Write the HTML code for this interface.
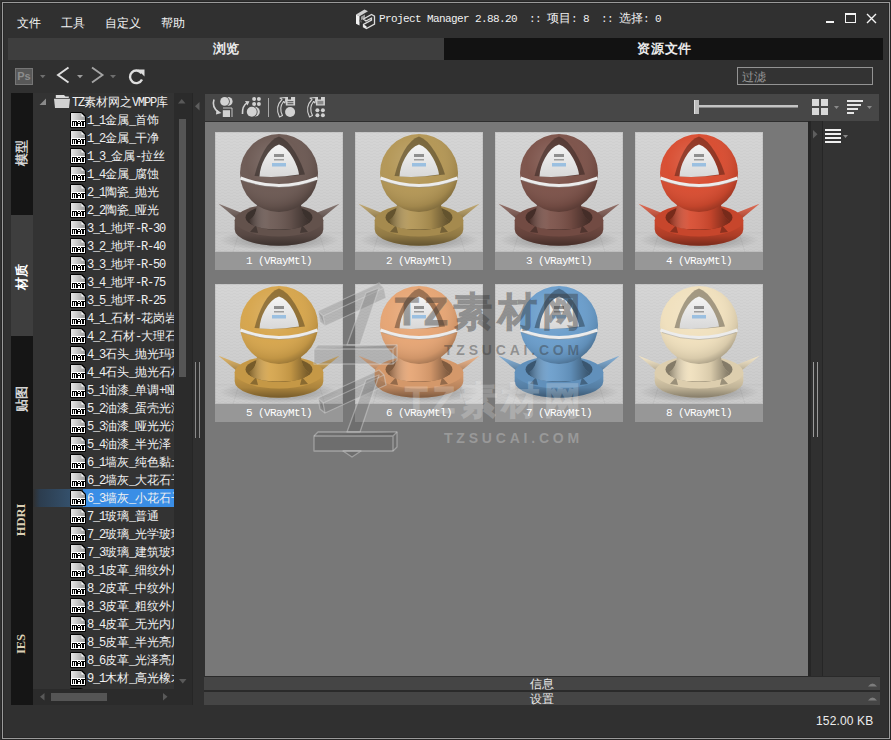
<!DOCTYPE html>
<html><head><meta charset="utf-8">
<style>
*{margin:0;padding:0;box-sizing:border-box}
html,body{width:891px;height:740px;overflow:hidden;background:#303030}
body{position:relative;font-family:"Liberation Sans",sans-serif;color:#fff}
.a{position:absolute}
.frame{left:2px;top:2px;width:888px;height:737px;border:1px solid #9a9a9a;box-shadow:0 0 0 1px #262626,inset 0 0 0 1px #282828}
.menu{top:15px;font-size:12px;color:#f4f4f4;line-height:16px}
.mono{font-family:"Liberation Mono",monospace}
.tabbar{left:8px;top:38px;width:875px;height:22px;background:#121212}
.tab1{left:8px;top:38px;width:436px;height:22px;background:#3e3e3e}
.tabtxt{top:41px;font-size:13px;font-weight:bold;color:#eaeaea;line-height:16px}
.filter{left:737px;top:67px;width:136px;height:18px;border:1px solid #939393;background:#333}
.filter span{position:absolute;left:4px;top:2px;font-size:12px;color:#9a9a9a;line-height:14px}
.vtabs{left:11px;top:93px;width:22px;height:612px;background:#151515}
.vtab2{left:11px;top:215px;width:22px;height:121px;background:#3e3e3e}
.vt{width:40px;height:14px;font-size:13px;font-weight:bold;color:#d4d4d4;text-align:center;line-height:14px;white-space:nowrap;transform:rotate(-90deg)}
.vs{font-family:"Liberation Serif",serif;font-size:12.5px;color:#dccfb4}
.tree{left:33px;top:93px;width:141px;height:596px;background:#333;overflow:hidden}
.row{position:absolute;left:0;height:18px;width:141px;white-space:nowrap}
.row .ic{position:absolute;left:37px;top:1px;width:16px;height:16px}
.row .tx{position:absolute;left:54px;top:2px;font-size:12px;line-height:14px;color:#f0f0f0}

.row .tx i{font-style:normal}
.row .tx .m{font-family:"Liberation Mono",monospace;letter-spacing:-1.2px}
.row.sel{background:linear-gradient(90deg,#303030 0px,#2c3d4f 7px,#34506b 37px,#34506b 50px,#3a8ee6 50px)}
.vscroll{left:174px;top:93px;width:18px;height:596px;background:#2b2b2b}
.hscroll{left:33px;top:689px;width:159px;height:16px;background:#2b2b2b}
.split1{left:192px;top:93px;width:1px;height:612px;background:#262626}
.grid{left:205px;top:122px;width:603px;height:554px;background:#787878}
.gtool{left:205px;top:94px;width:674px;height:28px;background:#474747;border-bottom:1px solid #2e2e2e}
.card{position:absolute;width:128px;height:138px;background:#d3d3d3}
.card .lbl{position:absolute;left:0;top:120px;width:128px;height:18px;background:#979797;color:#fff;font-size:11px;line-height:18px;text-align:center;font-family:"Liberation Mono",monospace;letter-spacing:-0.6px}
.card svg{position:absolute;left:0;top:0}
.rpanel{left:822px;top:121px;width:58px;height:555px;background:#333}
.bbar{left:204px;width:676px;height:14px;background:#454545;border-top:1px solid #2a2a2a}
.bbar span{position:absolute;left:326px;top:-1px;font-size:12px;line-height:16px;color:#e8e8e8}
.status{left:816px;top:713px;font-size:12px;color:#ececec;line-height:16px;letter-spacing:0.15px}
</style></head><body>
<svg width="0" height="0" style="position:absolute">
<defs>
<linearGradient id="matg" x1="0" y1="0" x2="1" y2="0"><stop offset="0" stop-color="#e8e8e8"/><stop offset="1" stop-color="#9a9a9a"/></linearGradient>

<radialGradient id="sph" cx="0.42" cy="0.35" r="0.68"><stop offset="0" stop-color="#fff" stop-opacity="0.16"/><stop offset="0.5" stop-color="#fff" stop-opacity="0.02"/><stop offset="0.85" stop-color="#000" stop-opacity="0.1"/><stop offset="1" stop-color="#000" stop-opacity="0.3"/></radialGradient>
<linearGradient id="neckg" x1="0" y1="0" x2="1" y2="0"><stop offset="0" stop-color="#000" stop-opacity="0.4"/><stop offset="0.35" stop-color="#fff" stop-opacity="0.06"/><stop offset="0.7" stop-color="#000" stop-opacity="0.1"/><stop offset="1" stop-color="#000" stop-opacity="0.45"/></linearGradient>
<linearGradient id="baseg" x1="0" y1="0" x2="0" y2="1"><stop offset="0" stop-color="#000" stop-opacity="0.05"/><stop offset="0.6" stop-color="#000" stop-opacity="0.2"/><stop offset="1" stop-color="#000" stop-opacity="0.45"/></linearGradient>
<linearGradient id="hornl" x1="0" y1="0" x2="0" y2="1"><stop offset="0" stop-color="#fff" stop-opacity="0.15"/><stop offset="1" stop-color="#000" stop-opacity="0.35"/></linearGradient>
<linearGradient id="bgg" x1="0" y1="0" x2="0" y2="1"><stop offset="0" stop-color="#d5d5d5"/><stop offset="1" stop-color="#cacaca"/></linearGradient><pattern id="tex" width="6" height="3" patternUnits="userSpaceOnUse"><rect width="3" height="1" fill="#000" fill-opacity="0.02"/><rect x="3" y="1" width="3" height="1" fill="#000" fill-opacity="0.02"/></pattern>
<radialGradient id="shad" cx="0.5" cy="0.5" r="0.5"><stop offset="0" stop-color="#000" stop-opacity="0.35"/><stop offset="1" stop-color="#000" stop-opacity="0"/></radialGradient>
<linearGradient id="wing" x1="0" y1="0" x2="0" y2="1"><stop offset="0" stop-color="#f4f4f4"/><stop offset="1" stop-color="#d8d8d8"/></linearGradient>
<symbol id="mat" viewBox="0 0 128 120">
<rect width="128" height="120" fill="url(#bgg)"/><rect width="128" height="120" fill="url(#tex)"/><path d="M0 101 H128 M24 101 L18 120 M104 101 L110 120" stroke="#000" stroke-opacity="0.06" stroke-width="0.8"/><rect x="0.5" y="0.5" width="127" height="119" fill="none" stroke="#000" stroke-opacity="0.06"/>
<ellipse cx="64" cy="108" rx="60" ry="11" fill="url(#shad)"/>
<path d="M3.5 71.8 L25.5 80.5 Q28 85 25.5 90 Z" fill="currentColor"/><path d="M3.5 71.8 L25.5 80.5 Q28 85 25.5 90 Z" fill="url(#hornl)"/>
<path d="M124.5 71.8 L102.5 80.5 Q100 85 102.5 90 Z" fill="currentColor"/><path d="M124.5 71.8 L102.5 80.5 Q100 85 102.5 90 Z" fill="url(#hornl)"/>
<path d="M19.7 88.2 L19.7 97.5 A44.3 16.3 0 0 0 108.3 97.5 L108.3 88.2 Z" fill="currentColor"/><path d="M19.7 88.2 L19.7 97.5 A44.3 16.3 0 0 0 108.3 97.5 L108.3 88.2 Z" fill="url(#baseg)"/>
<ellipse cx="64" cy="88.2" rx="44.3" ry="16.3" fill="currentColor"/><ellipse cx="64" cy="88.2" rx="44.3" ry="16.3" fill="#000" fill-opacity="0.08"/>
<ellipse cx="64" cy="85.4" rx="33.5" ry="12.6" fill="#000" fill-opacity="0.4"/>
<path d="M35 100 L41 93 L43 101 Z" fill="#000" fill-opacity="0.3"/><path d="M93 100 L87 93 L85 101 Z" fill="#000" fill-opacity="0.3"/>
<path d="M42 73 Q41 84 34.5 88 Q35 97.5 64 97.5 Q93 97.5 93.5 88 Q87 84 86 73 Z" fill="currentColor"/><path d="M42 73 Q41 84 34.5 88 Q35 97.5 64 97.5 Q93 97.5 93.5 88 Q87 84 86 73 Z" fill="url(#neckg)"/>
<circle cx="64" cy="41" r="39" fill="currentColor"/><circle cx="64" cy="41" r="39" fill="url(#sph)"/>
<path d="M64 4.5 Q72 7 80 20 Q87 32 90 42.5 Q64 46 39.5 44 Q43 30 49 19 Q56 7 64 4.5Z" fill="#000" fill-opacity="0.32"/>
<path d="M64 12.5 Q72 15 78 26 Q83 35 84 42.5 Q64 46 44.5 44.5 Q45 35 50 26 Q56 15 64 12.5Z" fill="url(#wing)"/>
<rect x="59" y="22" width="10" height="3" fill="#444" fill-opacity="0.55"/><rect x="59" y="27" width="10" height="1.5" fill="#555" fill-opacity="0.5"/><rect x="57" y="31" width="14" height="3.5" fill="#6aa8e0" fill-opacity="0.6"/>
<path d="M25.5 46 Q64 61 102.5 46" stroke="#ececec" stroke-width="3" fill="none"/>
<path d="M27 48.5 Q64 62.5 101 48.5" stroke="#8a8a8a" stroke-width="0.8" stroke-opacity="0.5" fill="none"/>
</symbol>
<symbol id="maticon" viewBox="0 0 16 16">
<path d="M0.5 0.5 L11.5 0.5 L15.5 4.5 L15.5 15.5 L0.5 15.5 Z" fill="#fff" stroke="#000" stroke-width="1"/>
<path d="M1 1 L11.3 1 L15 4.7 L15 8 L1 8 Z" fill="url(#matg)"/>
<path d="M11.5 1 L15 4.5 L11.5 4.5 Z" fill="#fff"/><path d="M11.5 0.5 L15.5 4.5" stroke="#000" stroke-width="1.2"/>
<g fill="#000" shape-rendering="crispEdges">
<rect x="2" y="9" width="5" height="1"/><rect x="2" y="9" width="1" height="5"/><rect x="4" y="10" width="1" height="4"/><rect x="6" y="10" width="1" height="4"/>
<rect x="8" y="9" width="2" height="1"/><rect x="7" y="10" width="1" height="4"/><rect x="10" y="10" width="1" height="4"/><rect x="8" y="11" width="2" height="1"/>
<rect x="11" y="9" width="4" height="1"/><rect x="12" y="10" width="2" height="4"/>
</g>
</symbol>
</defs></svg>
<div class="a frame"></div>

<!-- menu -->
<div class="a menu" style="left:17px">文件</div>
<div class="a menu" style="left:61px">工具</div>
<div class="a menu" style="left:105px">自定义</div>
<div class="a menu" style="left:161px">帮助</div>

<!-- title -->
<div class="a mono" style="left:379px;top:12px;font-size:11px;line-height:14px;color:#f0f0f0;letter-spacing:-0.6px">Project Manager 2.88.20</div>
<div class="a mono" style="left:529px;top:12px;font-size:11px;line-height:14px;color:#f0f0f0;letter-spacing:-0.6px">::</div>
<div class="a" style="left:547px;top:11px;font-size:12px;line-height:14px;color:#f0f0f0">项目</div>
<div class="a mono" style="left:571px;top:12px;font-size:11px;line-height:14px;color:#f0f0f0;letter-spacing:-0.6px">: 8</div>
<div class="a mono" style="left:601px;top:12px;font-size:11px;line-height:14px;color:#f0f0f0;letter-spacing:-0.6px">::</div>
<div class="a" style="left:619px;top:11px;font-size:12px;line-height:14px;color:#f0f0f0">选择</div>
<div class="a mono" style="left:643px;top:12px;font-size:11px;line-height:14px;color:#f0f0f0;letter-spacing:-0.6px">: 0</div>

<!-- window controls -->
<div class="a" style="left:826px;top:21px;width:8px;height:2px;background:#f4f4f4"></div>
<div class="a" style="left:845px;top:13px;width:11px;height:10px;border:1px solid #f4f4f4;border-top-width:2px"></div>
<svg class="a" style="left:866px;top:13px" width="11" height="11"><path d="M1 1L10 10M10 1L1 10" stroke="#f4f4f4" stroke-width="1.4"/></svg>

<!-- tab bar -->
<div class="a tabbar"></div>
<div class="a tab1"></div>
<div class="a tabtxt" style="left:213px">浏览</div>
<div class="a tabtxt" style="left:637px;letter-spacing:0.8px">资源文件</div>

<!-- toolbar -->
<div class="a filter"><span>过滤</span></div>

<!-- left vertical tabs -->
<div class="a vtabs"></div>
<div class="a vtab2"></div>

<!-- tree -->
<div class="a tree" id="tree">
<div class="row" style="top:0px"><svg style="position:absolute;left:6px;top:5px" width="8" height="8"><path d="M7 0.5 L7 7 L0.5 7 Z" fill="#8a8a8a"/></svg><svg style="position:absolute;left:20px;top:0px" width="18" height="16"><path d="M2.8 2 L11 2 L12.5 3.6 L15.8 3.6 L15.8 4.9 L2.8 4.9 Z" fill="#dcdcdc"/><path d="M1 5.8 L17 5.8 L16 15 L2 15 Z" fill="#d2d2d2"/></svg><span class="tx" style="left:39px"><i class="m">TZ</i><i class="c">素材网之</i><i class="m">VMPP</i><i class="c">库</i></span></div>
<div class="row" style="top:18px"><svg class="ic" width="16" height="16"><use href="#maticon"/></svg><span class="tx"><i class="m">1_1</i><i class="c">金属</i><i class="m">_</i><i class="c">首饰</i></span></div>
<div class="row" style="top:36px"><svg class="ic" width="16" height="16"><use href="#maticon"/></svg><span class="tx"><i class="m">1_2</i><i class="c">金属</i><i class="m">_</i><i class="c">干净</i></span></div>
<div class="row" style="top:54px"><svg class="ic" width="16" height="16"><use href="#maticon"/></svg><span class="tx"><i class="m">1_3_</i><i class="c">金属</i><i class="m">-</i><i class="c">拉丝</i></span></div>
<div class="row" style="top:72px"><svg class="ic" width="16" height="16"><use href="#maticon"/></svg><span class="tx"><i class="m">1_4</i><i class="c">金属</i><i class="m">_</i><i class="c">腐蚀</i></span></div>
<div class="row" style="top:90px"><svg class="ic" width="16" height="16"><use href="#maticon"/></svg><span class="tx"><i class="m">2_1</i><i class="c">陶瓷</i><i class="m">_</i><i class="c">抛光</i></span></div>
<div class="row" style="top:108px"><svg class="ic" width="16" height="16"><use href="#maticon"/></svg><span class="tx"><i class="m">2_2</i><i class="c">陶瓷</i><i class="m">_</i><i class="c">哑光</i></span></div>
<div class="row" style="top:126px"><svg class="ic" width="16" height="16"><use href="#maticon"/></svg><span class="tx"><i class="m">3_1_</i><i class="c">地坪</i><i class="m">-R-30</i></span></div>
<div class="row" style="top:144px"><svg class="ic" width="16" height="16"><use href="#maticon"/></svg><span class="tx"><i class="m">3_2_</i><i class="c">地坪</i><i class="m">-R-40</i></span></div>
<div class="row" style="top:162px"><svg class="ic" width="16" height="16"><use href="#maticon"/></svg><span class="tx"><i class="m">3_3_</i><i class="c">地坪</i><i class="m">-R-50</i></span></div>
<div class="row" style="top:180px"><svg class="ic" width="16" height="16"><use href="#maticon"/></svg><span class="tx"><i class="m">3_4_</i><i class="c">地坪</i><i class="m">-R-75</i></span></div>
<div class="row" style="top:198px"><svg class="ic" width="16" height="16"><use href="#maticon"/></svg><span class="tx"><i class="m">3_5_</i><i class="c">地坪</i><i class="m">-R-25</i></span></div>
<div class="row" style="top:216px"><svg class="ic" width="16" height="16"><use href="#maticon"/></svg><span class="tx"><i class="m">4_1_</i><i class="c">石材</i><i class="m">-</i><i class="c">花岗岩</i></span></div>
<div class="row" style="top:234px"><svg class="ic" width="16" height="16"><use href="#maticon"/></svg><span class="tx"><i class="m">4_2_</i><i class="c">石材</i><i class="m">-</i><i class="c">大理石</i></span></div>
<div class="row" style="top:252px"><svg class="ic" width="16" height="16"><use href="#maticon"/></svg><span class="tx"><i class="m">4_3</i><i class="c">石头</i><i class="m">_</i><i class="c">抛光玛瑙</i></span></div>
<div class="row" style="top:270px"><svg class="ic" width="16" height="16"><use href="#maticon"/></svg><span class="tx"><i class="m">4_4</i><i class="c">石头</i><i class="m">_</i><i class="c">抛光石材</i></span></div>
<div class="row" style="top:288px"><svg class="ic" width="16" height="16"><use href="#maticon"/></svg><span class="tx"><i class="m">5_1</i><i class="c">油漆</i><i class="m">_</i><i class="c">单调</i><i class="m">+</i><i class="c">哑光</i></span></div>
<div class="row" style="top:306px"><svg class="ic" width="16" height="16"><use href="#maticon"/></svg><span class="tx"><i class="m">5_2</i><i class="c">油漆</i><i class="m">_</i><i class="c">蛋壳光泽</i></span></div>
<div class="row" style="top:324px"><svg class="ic" width="16" height="16"><use href="#maticon"/></svg><span class="tx"><i class="m">5_3</i><i class="c">油漆</i><i class="m">_</i><i class="c">哑光光泽</i></span></div>
<div class="row" style="top:342px"><svg class="ic" width="16" height="16"><use href="#maticon"/></svg><span class="tx"><i class="m">5_4</i><i class="c">油漆</i><i class="m">_</i><i class="c">半光泽</i></span></div>
<div class="row" style="top:360px"><svg class="ic" width="16" height="16"><use href="#maticon"/></svg><span class="tx"><i class="m">6_1</i><i class="c">墙灰</i><i class="m">_</i><i class="c">纯色黏土</i></span></div>
<div class="row" style="top:378px"><svg class="ic" width="16" height="16"><use href="#maticon"/></svg><span class="tx"><i class="m">6_2</i><i class="c">墙灰</i><i class="m">_</i><i class="c">大花石子</i></span></div>
<div class="row sel" style="top:396px"><svg class="ic" width="16" height="16"><use href="#maticon"/></svg><span class="tx"><i class="m">6_3</i><i class="c">墙灰</i><i class="m">_</i><i class="c">小花石子</i></span></div>
<div class="row" style="top:414px"><svg class="ic" width="16" height="16"><use href="#maticon"/></svg><span class="tx"><i class="m">7_1</i><i class="c">玻璃</i><i class="m">_</i><i class="c">普通</i></span></div>
<div class="row" style="top:432px"><svg class="ic" width="16" height="16"><use href="#maticon"/></svg><span class="tx"><i class="m">7_2</i><i class="c">玻璃</i><i class="m">_</i><i class="c">光学玻璃</i></span></div>
<div class="row" style="top:450px"><svg class="ic" width="16" height="16"><use href="#maticon"/></svg><span class="tx"><i class="m">7_3</i><i class="c">玻璃</i><i class="m">_</i><i class="c">建筑玻璃</i></span></div>
<div class="row" style="top:468px"><svg class="ic" width="16" height="16"><use href="#maticon"/></svg><span class="tx"><i class="m">8_1</i><i class="c">皮革</i><i class="m">_</i><i class="c">细纹外层</i></span></div>
<div class="row" style="top:486px"><svg class="ic" width="16" height="16"><use href="#maticon"/></svg><span class="tx"><i class="m">8_2</i><i class="c">皮革</i><i class="m">_</i><i class="c">中纹外层</i></span></div>
<div class="row" style="top:504px"><svg class="ic" width="16" height="16"><use href="#maticon"/></svg><span class="tx"><i class="m">8_3</i><i class="c">皮革</i><i class="m">_</i><i class="c">粗纹外层</i></span></div>
<div class="row" style="top:522px"><svg class="ic" width="16" height="16"><use href="#maticon"/></svg><span class="tx"><i class="m">8_4</i><i class="c">皮革</i><i class="m">_</i><i class="c">无光内层</i></span></div>
<div class="row" style="top:540px"><svg class="ic" width="16" height="16"><use href="#maticon"/></svg><span class="tx"><i class="m">8_5</i><i class="c">皮革</i><i class="m">_</i><i class="c">半光亮层</i></span></div>
<div class="row" style="top:558px"><svg class="ic" width="16" height="16"><use href="#maticon"/></svg><span class="tx"><i class="m">8_6</i><i class="c">皮革</i><i class="m">_</i><i class="c">光泽亮层</i></span></div>
<div class="row" style="top:576px"><svg class="ic" width="16" height="16"><use href="#maticon"/></svg><span class="tx"><i class="m">9_1</i><i class="c">木材</i><i class="m">_</i><i class="c">高光橡木</i></span></div>
<div class="row" style="top:594px"><svg class="ic" width="16" height="16"><use href="#maticon"/></svg><span class="tx"><i class="m">9_2</i><i class="c">木材_</i></span></div>
</div>
<div class="a vscroll"></div>
<div class="a hscroll"></div>
<div class="a split1"></div>

<!-- grid -->
<div class="a gtool"></div>
<div class="a grid"></div>
<div class="card" style="left:215px;top:132px;color:#6c5953"><svg width="128" height="120"><use href="#mat"/></svg><div class="lbl">1 (VRayMtl)</div></div>
<div class="card" style="left:355px;top:132px;color:#b39655"><svg width="128" height="120"><use href="#mat"/></svg><div class="lbl">2 (VRayMtl)</div></div>
<div class="card" style="left:495px;top:132px;color:#7c5249"><svg width="128" height="120"><use href="#mat"/></svg><div class="lbl">3 (VRayMtl)</div></div>
<div class="card" style="left:635px;top:132px;color:#d84c30"><svg width="128" height="120"><use href="#mat"/></svg><div class="lbl">4 (VRayMtl)</div></div>
<div class="card" style="left:215px;top:284px;color:#d6a54c"><svg width="128" height="120"><use href="#mat"/></svg><div class="lbl">5 (VRayMtl)</div></div>
<div class="card" style="left:355px;top:284px;color:#e6a574"><svg width="128" height="120"><use href="#mat"/></svg><div class="lbl">6 (VRayMtl)</div></div>
<div class="card" style="left:495px;top:284px;color:#6a9dcb"><svg width="128" height="120"><use href="#mat"/></svg><div class="lbl">7 (VRayMtl)</div></div>
<div class="card" style="left:635px;top:284px;color:#f0e0bd"><svg width="128" height="120"><use href="#mat"/></svg><div class="lbl">8 (VRayMtl)</div></div>
<div class="a rpanel"></div>



<!-- watermark -->
<svg class="a" style="left:300px;top:270px" width="300" height="195" viewBox="300 270 300 195">
<g id="logo1" fill="rgba(70,70,70,0.2)" stroke="rgba(215,215,215,0.45)" stroke-width="1.3" stroke-linejoin="round">
<path d="M318 311 L379 283 L384 288 L386 298 L325 326 L320 322 Z"/>
<path d="M318 311 L323 316 L325 326"/><path d="M323 316 L384 288"/>
<path d="M366 293 L379 288 L360 345 L347 345 Z"/>
<path d="M314 349 L318 345 L397 345 L397 360 L393 364 L314 364 Z"/><path d="M314 349 L393 349 L397 345 M393 349 L393 364"/>
</g>
<g fill="rgba(70,70,70,0.2)" stroke="rgba(215,215,215,0.45)" stroke-width="1.3" stroke-linejoin="round">
<path d="M318 398 L379 370 L384 375 L386 385 L325 413 L320 409 Z"/>
<path d="M318 398 L323 403 L325 413"/><path d="M323 403 L384 375"/>
<path d="M366 380 L379 375 L360 432 L347 432 Z"/>
<path d="M314 436 L318 432 L397 432 L397 447 L393 451 L314 451 Z"/><path d="M314 436 L393 436 L397 432 M393 436 L393 451"/>
<path d="M343 451 L361 451 L352 457 Z"/>
</g>
</svg>
<div class="a" style="left:395px;top:287px;font-size:39px;font-weight:bold;line-height:50px;color:#373737;opacity:0.42;-webkit-text-stroke:1px #373737;white-space:nowrap;letter-spacing:5.3px">TZ素材网</div>
<div class="a" style="left:444px;top:342px;font-size:14px;font-weight:bold;line-height:16px;color:rgba(55,55,55,0.42);white-space:nowrap;letter-spacing:3.8px">TZSUCAI.COM</div>
<div class="a" style="left:405px;top:378px;font-size:37px;font-weight:bold;line-height:46px;color:#fff;opacity:0.2;-webkit-text-stroke:1px #fff;white-space:nowrap;letter-spacing:5px">TZ素材网</div>
<div class="a" style="left:444px;top:430px;font-size:14px;font-weight:bold;line-height:16px;color:rgba(255,255,255,0.25);white-space:nowrap;letter-spacing:3.8px">TZSUCAI.COM</div>
<!-- title icon -->
<svg class="a" style="left:355px;top:8px" width="21" height="22" viewBox="0 0 21 22">
<path d="M1 6.5 L9.5 1.5 L13 3.3 L4.5 8.3 Z" fill="#cfcfcf"/>
<path d="M1 6.5 L4.5 8.3 L4.5 17.5 L1 15.7 Z" fill="#f2f2f2"/>
<path d="M6 8.8 L10 6.5 L10 10 L6 12.3 Z" fill="#9a9a9a"/>
<path d="M4.5 11.5 L7 13 L7 15 L4.5 13.5Z" fill="#555"/>
<path d="M8.5 11 L16.5 6.5 L19.5 8.2 L19.5 16 L11.5 20.5 L8.5 18.8 L8.5 16.5 L16.5 12 L16.5 10 L11 13 Z" fill="none" stroke="#dcdcdc" stroke-width="1.3"/>
<path d="M8.5 16.5 L11.5 18.2 L11.5 20.5 L8.5 18.8Z" fill="#f0f0f0"/>
</svg>
<!-- toolbar icons -->
<div class="a" style="left:15px;top:68px;width:18px;height:17px;border:1px solid #767676;background:#585858;font-size:11px;font-weight:bold;line-height:15px;color:#8c8c8c;text-align:center;font-family:'Liberation Sans',sans-serif">Ps</div>
<svg class="a" style="left:40px;top:75px" width="6" height="4"><path d="M0 0 L5.5 0 L2.75 3.2Z" fill="#6e6e6e"/></svg>
<svg class="a" style="left:55px;top:66px" width="16" height="18"><path d="M13.5 1.5 L3 9 L13.5 16.5" fill="none" stroke="#dedede" stroke-width="1.9"/></svg>
<svg class="a" style="left:77px;top:75px" width="7" height="4"><path d="M0 0 L6 0 L3 3.2Z" fill="#9c9c9c"/></svg>
<svg class="a" style="left:90px;top:66px" width="16" height="18"><path d="M2 1.5 L12.5 9 L2 16.5" fill="none" stroke="#a4a4a4" stroke-width="1.9"/></svg>
<svg class="a" style="left:110px;top:75px" width="7" height="4"><path d="M0 0 L6 0 L3 3.2Z" fill="#6e6e6e"/></svg>
<svg class="a" style="left:127px;top:68px" width="19" height="18"><path d="M14.5 5.2 A6.3 6.3 0 1 0 15 11.5" fill="none" stroke="#dedede" stroke-width="2.4"/><path d="M10.5 1.5 L17.5 1.5 L17.5 8.5 Z" fill="#dedede"/></svg>

<!-- vertical tab labels -->
<div class="a vt" style="left:2px;top:146px"><span>模型</span></div>
<div class="a vt" style="left:2px;top:270px;color:#fff"><span>材质</span></div>
<div class="a vt" style="left:2px;top:392px"><span>贴图</span></div>
<div class="a vt vs" style="left:1px;top:513px"><span>HDRI</span></div>
<div class="a vt vs" style="left:1px;top:637px"><span>IES</span></div>
<!-- tree scrollbar details -->
<svg class="a" style="left:178px;top:99px" width="8" height="5"><path d="M0 4.5 L3.75 0 L7.5 4.5Z" fill="#595959"/></svg>
<div class="a" style="left:179px;top:119px;width:7px;height:258px;background:#555"></div>
<svg class="a" style="left:179px;top:679px" width="8" height="5"><path d="M0 0 L7.5 0 L3.75 4.5Z" fill="#595959"/></svg>
<svg class="a" style="left:40px;top:693px" width="5" height="8"><path d="M4.5 0 L4.5 7.5 L0 3.75Z" fill="#595959"/></svg>
<div class="a" style="left:51px;top:693px;width:56px;height:8px;background:#555"></div>
<svg class="a" style="left:163px;top:693px" width="5" height="8"><path d="M0 0 L0 7.5 L4.5 3.75Z" fill="#595959"/></svg>

<!-- left splitter -->
<svg class="a" style="left:195px;top:102px" width="5" height="9"><path d="M4.5 0 L4.5 8.5 L0 4.25Z" fill="#5e5e5e"/></svg>
<div class="a" style="left:195px;top:362px;width:1px;height:76px;background:#8a8a8a"></div>
<div class="a" style="left:199px;top:362px;width:1px;height:76px;background:#8a8a8a"></div>

<!-- right splitter -->
<div class="a" style="left:808px;top:121px;width:3px;height:555px;background:#262626"></div>
<div class="a" style="left:822px;top:121px;width:1px;height:555px;background:#262626"></div>
<svg class="a" style="left:813px;top:130px" width="5" height="9"><path d="M0 0 L0 8.5 L4.5 4.25Z" fill="#5e5e5e"/></svg>
<div class="a" style="left:813px;top:362px;width:1px;height:75px;background:#9a9a9a"></div>
<div class="a" style="left:817px;top:362px;width:1px;height:75px;background:#9a9a9a"></div>
<!-- right panel list icon -->
<svg class="a" style="left:825px;top:129px" width="25" height="15"><path d="M0 1 H16 M0 5 H16 M0 9 H16 M0 13 H16" stroke="#f0f0f0" stroke-width="1.8"/><path d="M18 6 L23 6 L20.5 9Z" fill="#8a8a8a"/></svg>

<!-- grid toolbar icons -->
<svg class="a" style="left:205px;top:94px" width="130" height="27" viewBox="205 94 130 27">
<g fill="#d2d2d2">
<circle cx="228.2" cy="101.4" r="4.4"/><circle cx="224.6" cy="101.4" r="5.2" fill="#484848"/><circle cx="224.6" cy="101.4" r="4.4"/>
<path d="M223 108 H232 V117" fill="none" stroke="#d2d2d2" stroke-width="0.9"/><rect x="222.8" y="110.2" width="7.2" height="6.8"/>
<path d="M214 99.5 Q211.5 107 218.5 112.3" fill="none" stroke="#d2d2d2" stroke-width="1.6"/><path d="M216.5 109.5 L221.5 113 L216 114.5 Z"/>
<circle cx="254.1" cy="99" r="2"/><circle cx="258.9" cy="99" r="2"/><circle cx="254.1" cy="104" r="2"/><circle cx="258.9" cy="104" r="2"/>
<circle cx="254.8" cy="111.8" r="5"/><circle cx="251.8" cy="111.8" r="5.8" fill="#484848"/><circle cx="251.8" cy="111.8" r="5"/>
<path d="M242.5 114 Q242 106 247 102.8" fill="none" stroke="#d2d2d2" stroke-width="1.6"/><path d="M245 101 L249.5 101.3 L247.5 105.5 Z"/>
<rect x="268" y="98" width="1" height="19" fill="#a8a8a8"/>
<path d="M285.8 97 H288 V99.5 H291 V97 H295.1 V105.5 H285.8 Z M287.5 101.2 V102.2 H293.4 V101.2 Z M287.5 103.3 V104.2 H293.4 V103.3 Z" fill-rule="evenodd"/>
<circle cx="290.1" cy="112" r="5"/>
<path d="M279.5 117 Q274.5 107 282 99.5 L280 98 L286 97.5 L285 103 L283.5 101.5 Q278.5 108 282.5 115.5 Z" fill="none" stroke="#d2d2d2" stroke-width="1.1" stroke-linejoin="round"/>
<path d="M315.9 97 H318 V99.5 H321 V97 H324.9 V105.5 H315.9 Z" /><rect x="317.4" y="100.8" width="6" height="3.6" fill="#8a8a8a"/>
<circle cx="317.4" cy="110.2" r="2"/><circle cx="322.9" cy="110.2" r="2"/><circle cx="317.4" cy="115.3" r="2"/><circle cx="322.9" cy="115.3" r="2"/>
<path d="M309.5 117 Q304.5 107 312 99.5 L310 98 L316 97.5 L315 103 L313.5 101.5 Q308.5 108 312.5 115.5 Z" fill="none" stroke="#d2d2d2" stroke-width="1.1" stroke-linejoin="round"/>
</g></svg>
<!-- slider -->
<div class="a" style="left:698px;top:105px;width:100px;height:3px;background:#c4c4c4;border-bottom:1px solid #888"></div>
<div class="a" style="left:694px;top:100px;width:5px;height:14px;background:#bdbdbd;border-left:1px solid #e0e0e0"></div>
<!-- view icons -->
<svg class="a" style="left:811px;top:98px" width="64" height="18">
<rect x="1" y="1" width="7" height="7" fill="#d8d8d8"/><rect x="10" y="1" width="7" height="7" fill="#d8d8d8"/><rect x="1" y="10" width="7" height="7" fill="#d8d8d8"/><rect x="10" y="10" width="7" height="7" fill="#d8d8d8"/>
<path d="M23 8 L28 8 L25.5 11Z" fill="#8a8a8a"/>
<path d="M36 3 H52 M36 7 H50 M36 11 H47 M36 15 H43" stroke="#e6e6e6" stroke-width="1.8"/>
<path d="M56 8 L61 8 L58.5 11Z" fill="#8a8a8a"/>
</svg>
<div class="a bbar" style="top:676px"><span>信息</span></div>
<div class="a bbar" style="top:690px;height:15px;border-top-width:2px"><span>设置</span></div>
<!-- bottom bar arrows -->
<svg class="a" style="left:868px;top:682px" width="9" height="5"><path d="M0 4.5 Q4.5 -1.5 9 4.5Z" fill="#7c7c7c"/></svg>
<svg class="a" style="left:868px;top:696px" width="9" height="5"><path d="M0 4.5 Q4.5 -1.5 9 4.5Z" fill="#7c7c7c"/></svg>
<div class="a status">152.00 KB</div>
</body></html>
